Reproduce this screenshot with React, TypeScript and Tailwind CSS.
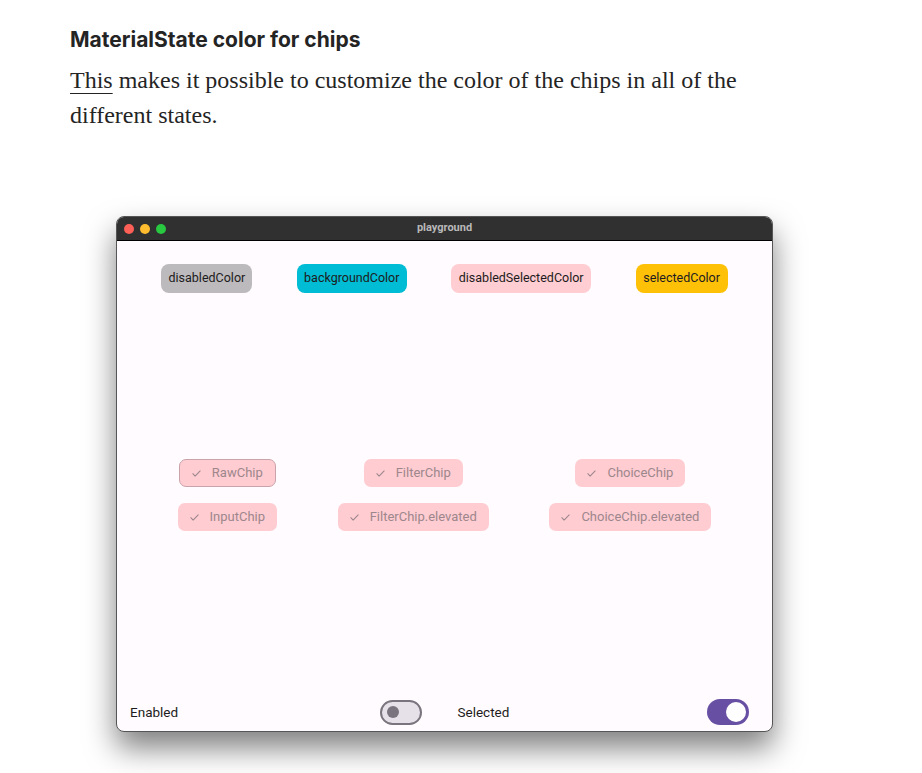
import React from "react";

function Check() {
  return (
    <svg width="11" height="11" viewBox="0 0 24 24" fill="none" stroke="currentColor" strokeWidth="2.4" strokeLinecap="round" strokeLinejoin="round">
      <path d="M4 12.5l5 5L20 6.5" />
    </svg>
  );
}

function Chip({ label, border }: { label: string; border?: boolean }) {
  return (
    <div
      className={
        "flex h-[28px] items-center gap-[10px] rounded-[7px] bg-[#ffccd2] pl-[11px] pr-[12px] text-[13px] text-[#9d878c] " +
        (border ? "border border-[#c9a3a9]" : "")
      }
    >
      <Check />
      <span>{label}</span>
    </div>
  );
}

function Toggle({ on }: { on?: boolean }) {
  if (on) {
    return (
      <div className="flex h-[26px] w-[42px] items-center justify-end rounded-full bg-[#6750a4] pr-[3px]">
        <div className="h-[20px] w-[20px] rounded-full bg-white" />
      </div>
    );
  }
  return (
    <div className="flex h-[25px] w-[42px] items-center rounded-full border-2 border-[#79747e] bg-[#e6e0e9] pl-[5px]">
      <div className="h-[12px] w-[12px] rounded-full bg-[#79747e]" />
    </div>
  );
}

export default function App() {
  return (
    <main className="min-h-screen bg-white pl-[70px] pt-[27px]">
      <h2 className="text-[21px] font-bold leading-[26px] text-[#242424]" style={{ fontFamily: "Inter, 'Liberation Sans', sans-serif" }}>
        MaterialState color for chips
      </h2>
      <p
        className="mt-[10px] w-[700px] text-[24px] leading-[35px] text-[#242424]"
        style={{ fontFamily: "'Liberation Serif', serif" }}
      >
        <span className="underline decoration-1 underline-offset-[5px]">This</span> makes it possible to customize the color of the chips in all of the different states.
      </p>

      <div
        className="ml-[46px] mt-[83px] flex h-[516px] w-[657px] flex-col overflow-hidden rounded-[8px] border border-[#555] bg-[#fffbfe] shadow-[0_16px_30px_rgba(0,0,0,0.5)]"
        style={{ fontFamily: "Roboto, 'Liberation Sans', sans-serif" }}
      >
        <div className="relative flex h-[24px] shrink-0 items-center justify-center border-b border-black bg-[#303030]">
          <div className="absolute left-[7px] top-[7px] flex gap-[6px]">
            <div className="h-[10px] w-[10px] rounded-full bg-[#fe5f57]" />
            <div className="h-[10px] w-[10px] rounded-full bg-[#febc2e]" />
            <div className="h-[10px] w-[10px] rounded-full bg-[#28c840]" />
          </div>
          <span className="text-[11px] font-bold text-[#b9b9b9]">playground</span>
        </div>

        <div className="mt-[23px] flex justify-evenly text-[12.5px] text-[#1d1b20]">
          <div className="flex h-[29px] w-[91px] items-center justify-center rounded-[8px] bg-[#bcbabd]">disabledColor</div>
          <div className="flex h-[29px] w-[110px] items-center justify-center rounded-[8px] bg-[#00bcd4]">backgroundColor</div>
          <div className="flex h-[29px] w-[140px] items-center justify-center rounded-[8px] bg-[#ffcdd2]">disabledSelectedColor</div>
          <div className="flex h-[29px] w-[92px] items-center justify-center rounded-[8px] bg-[#ffc107]">selectedColor</div>
        </div>

        <div className="flex flex-1 items-center justify-evenly pb-[2px]">
          <div className="flex flex-col items-center gap-[16px]">
            <Chip label="RawChip" border />
            <Chip label="InputChip" />
          </div>
          <div className="flex flex-col items-center gap-[16px]">
            <Chip label="FilterChip" />
            <Chip label="FilterChip.elevated" />
          </div>
          <div className="flex flex-col items-center gap-[16px]">
            <Chip label="ChoiceChip" />
            <Chip label="ChoiceChip.elevated" />
          </div>
        </div>

        <div className="mb-[6px] flex text-[13.5px] text-[#1d1b20]">
          <div className="flex flex-1 items-center justify-between pl-[13px] pr-[23px]">
            <span>Enabled</span>
            <Toggle />
          </div>
          <div className="flex flex-1 items-center justify-between pl-[13px] pr-[23px]">
            <span>Selected</span>
            <Toggle on />
          </div>
        </div>
      </div>
    </main>
  );
}
